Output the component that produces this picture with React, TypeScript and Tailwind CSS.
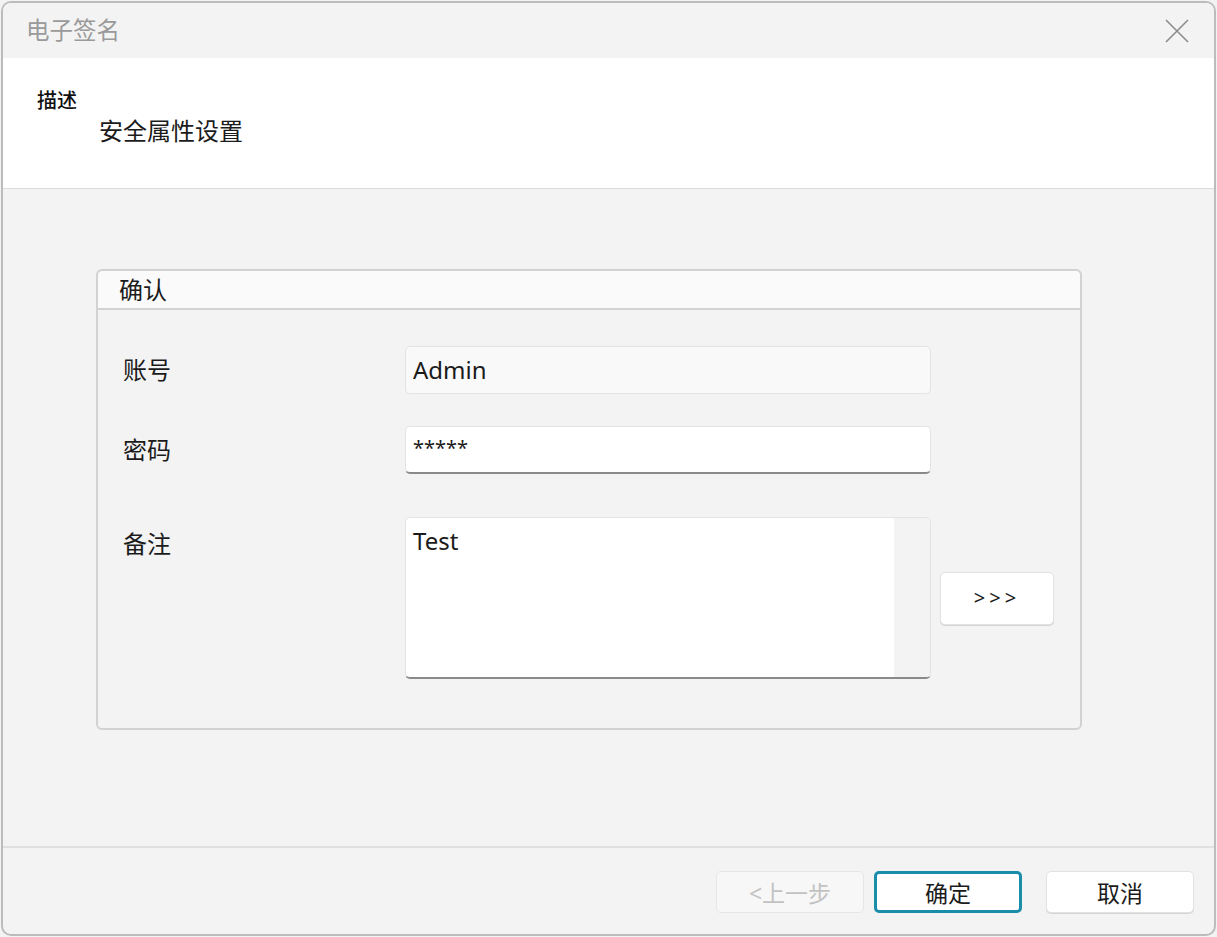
import React from "react";

const cjk = "font-['Segoe_UI','Noto_Sans','Noto_Sans_CJK_SC',sans-serif]";

const CloseIcon = () => (
  <svg width="24" height="24" viewBox="0 0 24 24" fill="none">
    <path d="M1 1 L23 23 M23 1 L1 23" stroke="#8c8c8c" strokeWidth="1.6" />
  </svg>
);

const FooterButton = ({
  label,
  variant = "normal",
}: {
  label: string;
  variant?: "normal" | "primary" | "disabled";
}) => {
  const styles =
    variant === "primary"
      ? "border-[3px] border-[#1a8ea8] bg-white text-[#1b1b1b]"
      : variant === "disabled"
      ? "border border-[#e6e6e6] bg-[#f7f7f7] text-[#c2c2c2]"
      : "border border-[#e2e2e2] bg-white text-[#1b1b1b] shadow-[0_1px_0_#d4d4d4]";
  return (
    <div
      className={`w-[148px] h-[42px] rounded-[5px] flex items-center justify-center pt-[3px] text-[23px] ${styles}`}
    >
      {label}
    </div>
  );
};

export default function App() {
  return (
    <div className={`w-[1217px] h-[937px] bg-[#f3f3f3] p-[1px] ${cjk}`}>
      <div className="w-full h-full border-2 border-[#bcbcbc] rounded-[10px] overflow-hidden flex flex-col bg-[#f3f3f3]">
        {/* Title bar */}
        <div className="h-[55px] shrink-0 flex items-center justify-between pl-[23px] pr-[25px] bg-[#f3f3f3]">
          <span className="text-[23.5px] text-[#9a9a9a]">电子签名</span>
          <CloseIcon />
        </div>

        {/* Description */}
        <div className="h-[131px] shrink-0 bg-white border-b border-[#dcdcdc] pl-[34px] pt-[30px]">
          <div className="text-[20px] leading-[26px] font-medium text-[#111]">描述</div>
          <div className="text-[24px] leading-[30px] text-[#1b1b1b] pl-[62px] mt-[2px]">
            安全属性设置
          </div>
        </div>

        {/* Body */}
        <div className="flex-1 pl-[93px] pt-[80px]">
          <div className="w-[986px] h-[461px] border-2 border-[#d2d2d2] rounded-[6px] flex flex-col">
            <div className="h-[39px] shrink-0 bg-[#fafafa] rounded-t-[5px] border-b-2 border-[#d2d2d2] pl-[21px] flex items-center text-[24px] text-[#1b1b1b]">
              确认
            </div>
            <div className="flex flex-col pl-[25px] pt-[36px] text-[24px] text-[#1b1b1b]">
              {/* account */}
              <div className="flex items-center h-[48px]">
                <div className="w-[282px]">账号</div>
                <div className="w-[526px] h-[48px] rounded-[5px] border border-[#e3e3e3] bg-[#f9f9f9] flex items-center pl-[7px] text-[24px]">
                  Admin
                </div>
              </div>
              {/* password */}
              <div className="flex items-center h-[48px] mt-[32px]">
                <div className="w-[282px]">密码</div>
                <div className="w-[526px] h-[48px] rounded-[5px] border border-[#e3e3e3] border-b-2 border-b-[#8a8a8a] bg-white pl-[7px] pt-[6px] text-[20px]">
                  *****
                </div>
              </div>
              {/* remark */}
              <div className="flex items-center mt-[43px]">
                <div className="w-[282px] self-start pt-[9px]">备注</div>
                <div className="w-[526px] h-[162px] rounded-[5px] border border-[#e3e3e3] border-b-2 border-b-[#8a8a8a] bg-white flex overflow-hidden">
                  <div className="flex-1 pl-[7px] pt-[5px] text-[24px]">Test</div>
                  <div className="w-[36px] h-full bg-[#f3f3f3]" />
                </div>
                <div className="ml-[9px] w-[114px] h-[53px] rounded-[5px] border border-[#e2e2e2] bg-white shadow-[0_1px_0_#d4d4d4] flex items-center justify-center text-[20px] tracking-[4px]">
                  &gt;&gt;&gt;
                </div>
              </div>
            </div>
          </div>
        </div>

        {/* Footer */}
        <div className="h-[88px] shrink-0 border-t-2 border-[#e0e0e0] flex items-start justify-end pt-[23px] pr-[20px]">
          <FooterButton label="<上一步" variant="disabled" />
          <div className="ml-[10px]">
            <FooterButton label="确定" variant="primary" />
          </div>
          <div className="ml-[24px]">
            <FooterButton label="取消" />
          </div>
        </div>
      </div>
    </div>
  );
}
